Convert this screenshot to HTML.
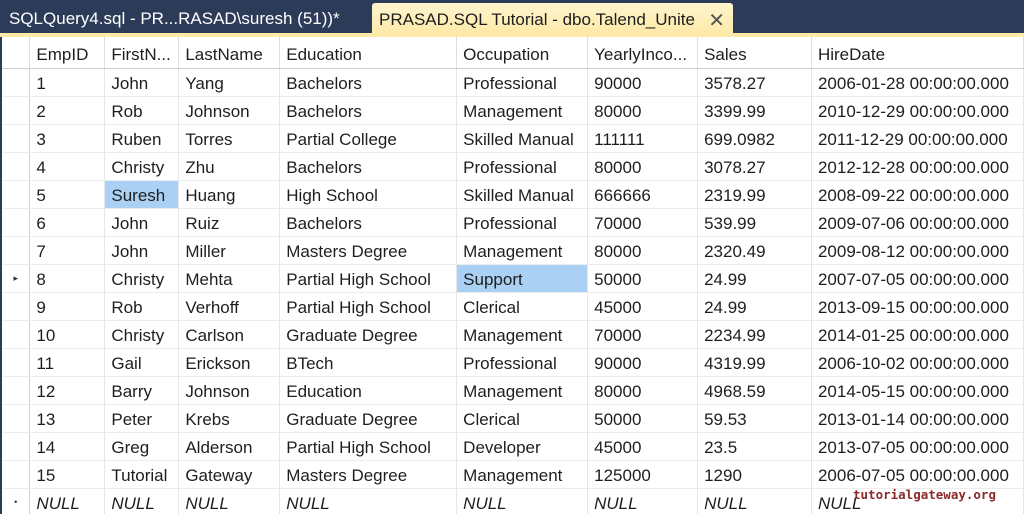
<!DOCTYPE html>
<html><head><style>
*{margin:0;padding:0;box-sizing:border-box}
body{width:1024px;height:514px;overflow:hidden;background:#2b3b58;font-family:"Liberation Sans",sans-serif;position:relative}
.t1{position:absolute;left:9px;top:9px;color:#fff;font-size:17px;white-space:nowrap}
.t2{position:absolute;left:372px;top:3px;width:361px;height:31px;background:linear-gradient(#fff5cf,#fde9a8);border-radius:3px 3px 0 0;font-size:17px;color:#1e1e1e;padding:7px 0 0 7px;white-space:nowrap}
.t2 .x{position:absolute;right:8px;top:5px;font-size:20px;color:#555}
.yl{position:absolute;left:0;top:33px;width:1024px;height:4px;background:#fde9a8}
.grid{position:absolute;left:2px;top:37px;width:1022px;height:477px;background:#fff;overflow:hidden}
table{border-collapse:collapse;table-layout:fixed;font-size:17px;color:#1e1e1e}
td{height:28px;border-right:1px solid #e6e6e6;border-bottom:1px solid #ececec;padding:4px 0 0 6px;white-space:nowrap;overflow:hidden}
tr.h td{height:31px;border-bottom:1px solid #cfcfcf;border-right:1px solid #dedede;padding-top:6px}
td.rh{padding:0;font-size:9px;text-align:center;color:#333;border-right:1px solid #cfcfcf}
.sel{background:#aad0f3}
tr.n td{font-style:italic}
.wm{position:absolute;left:853px;top:487px;font-family:"DejaVu Sans Mono","Liberation Mono",monospace;font-weight:bold;font-size:12.5px;color:#8a2a2a}
</style></head><body>
<div class="t1">SQLQuery4.sql - PR...RASAD\suresh (51))*</div>
<div class="t2">PRASAD.SQL Tutorial - dbo.Talend_Unite<span class="x">✕</span></div>
<div class="yl"></div>
<div class="grid">
<table>
<colgroup><col style="width:28px"><col style="width:75px"><col style="width:74px"><col style="width:101px"><col style="width:177px"><col style="width:131px"><col style="width:110px"><col style="width:114px"><col style="width:212px"></colgroup>
<tr class="h"><td class="rh"></td><td>EmpID</td><td>FirstN...</td><td>LastName</td><td>Education</td><td>Occupation</td><td>YearlyInco...</td><td>Sales</td><td>HireDate</td></tr>
<tr><td class="rh"></td><td>1</td><td>John</td><td>Yang</td><td>Bachelors</td><td>Professional</td><td>90000</td><td>3578.27</td><td>2006-01-28 00:00:00.000</td></tr>
<tr><td class="rh"></td><td>2</td><td>Rob</td><td>Johnson</td><td>Bachelors</td><td>Management</td><td>80000</td><td>3399.99</td><td>2010-12-29 00:00:00.000</td></tr>
<tr><td class="rh"></td><td>3</td><td>Ruben</td><td>Torres</td><td>Partial College</td><td>Skilled Manual</td><td>111111</td><td>699.0982</td><td>2011-12-29 00:00:00.000</td></tr>
<tr><td class="rh"></td><td>4</td><td>Christy</td><td>Zhu</td><td>Bachelors</td><td>Professional</td><td>80000</td><td>3078.27</td><td>2012-12-28 00:00:00.000</td></tr>
<tr><td class="rh"></td><td>5</td><td class="sel">Suresh</td><td>Huang</td><td>High School</td><td>Skilled Manual</td><td>666666</td><td>2319.99</td><td>2008-09-22 00:00:00.000</td></tr>
<tr><td class="rh"></td><td>6</td><td>John</td><td>Ruiz</td><td>Bachelors</td><td>Professional</td><td>70000</td><td>539.99</td><td>2009-07-06 00:00:00.000</td></tr>
<tr><td class="rh"></td><td>7</td><td>John</td><td>Miller</td><td>Masters Degree</td><td>Management</td><td>80000</td><td>2320.49</td><td>2009-08-12 00:00:00.000</td></tr>
<tr><td class="rh">▸</td><td>8</td><td>Christy</td><td>Mehta</td><td>Partial High School</td><td class="sel">Support</td><td>50000</td><td>24.99</td><td>2007-07-05 00:00:00.000</td></tr>
<tr><td class="rh"></td><td>9</td><td>Rob</td><td>Verhoff</td><td>Partial High School</td><td>Clerical</td><td>45000</td><td>24.99</td><td>2013-09-15 00:00:00.000</td></tr>
<tr><td class="rh"></td><td>10</td><td>Christy</td><td>Carlson</td><td>Graduate Degree</td><td>Management</td><td>70000</td><td>2234.99</td><td>2014-01-25 00:00:00.000</td></tr>
<tr><td class="rh"></td><td>11</td><td>Gail</td><td>Erickson</td><td>BTech</td><td>Professional</td><td>90000</td><td>4319.99</td><td>2006-10-02 00:00:00.000</td></tr>
<tr><td class="rh"></td><td>12</td><td>Barry</td><td>Johnson</td><td>Education</td><td>Management</td><td>80000</td><td>4968.59</td><td>2014-05-15 00:00:00.000</td></tr>
<tr><td class="rh"></td><td>13</td><td>Peter</td><td>Krebs</td><td>Graduate Degree</td><td>Clerical</td><td>50000</td><td>59.53</td><td>2013-01-14 00:00:00.000</td></tr>
<tr><td class="rh"></td><td>14</td><td>Greg</td><td>Alderson</td><td>Partial High School</td><td>Developer</td><td>45000</td><td>23.5</td><td>2013-07-05 00:00:00.000</td></tr>
<tr><td class="rh"></td><td>15</td><td>Tutorial</td><td>Gateway</td><td>Masters Degree</td><td>Management</td><td>125000</td><td>1290</td><td>2006-07-05 00:00:00.000</td></tr>
<tr class="n"><td class="rh" style="font-style:normal">•</td><td>NULL</td><td>NULL</td><td>NULL</td><td>NULL</td><td>NULL</td><td>NULL</td><td>NULL</td><td>NULL</td></tr>
</table>
</div>
<div class="wm">tutorialgateway.org</div>
</body></html>
